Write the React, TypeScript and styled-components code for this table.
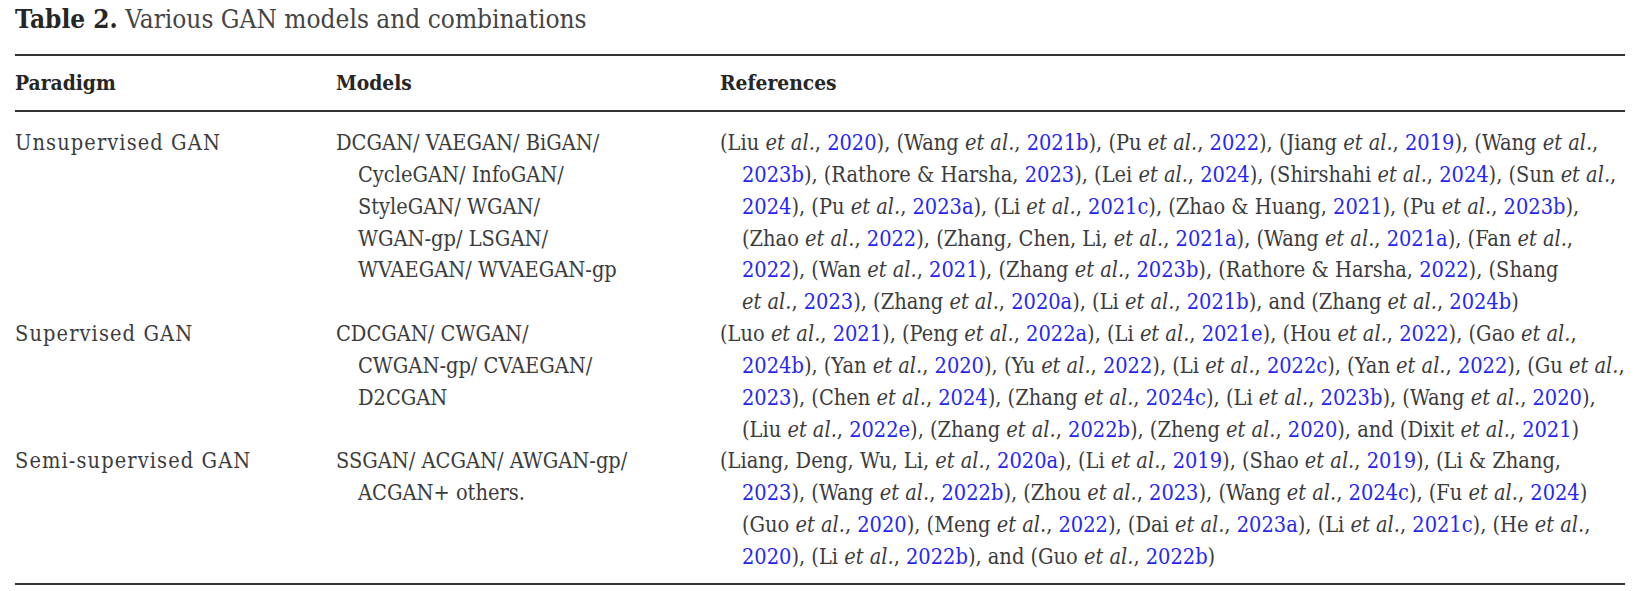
import React from "react";
import styled, { createGlobalStyle } from "styled-components";

const Global = createGlobalStyle`
  html, body { margin: 0; padding: 0; background: #ffffff; }
  body { font-family: "DejaVu Serif", "Liberation Serif", serif; color: #3c3c3c; }
`;

const Page = styled.div`
  width: 1635px;
  height: 591px;
  padding: 0 10px 0 15px;
  box-sizing: border-box;
  font-family: "DejaVu Serif", "Liberation Serif", serif;
  font-stretch: condensed;
`;

const Caption = styled.div`
  height: 54px;
  box-sizing: border-box;
  padding-top: 3px;
  font-size: 26px;
  line-height: 32px;
  color: #444;
  font-weight: 300;
`;

const CaptionLabel = styled.span`
  font-weight: 700;
  color: #262626;
`;

const Table = styled.div`
  display: grid;
  grid-template-columns: 321px 384px 1fr;
  border-top: 2px solid #333;
  border-bottom: 2px solid #333;
`;

const HeadCell = styled.div`
  font-weight: 700;
  color: #262626;
  font-size: 20.8px;
  line-height: 32px;
  padding: 11px 0 11px 0;
  border-bottom: 2px solid #333;
`;

const Cell = styled.div<{ $first?: boolean; $last?: boolean; $spread?: number }>`
  font-size: 21.6px;
  line-height: 31.85px;
  letter-spacing: ${(p) => p.$spread ?? 0}px;
  padding-top: ${(p) => (p.$first ? "15px" : "0")};
  padding-bottom: ${(p) => (p.$last ? "10px" : "0")};
`;

const Line = styled.div<{ $indent?: boolean }>`
  white-space: nowrap;
  padding-left: ${(p) => (p.$indent ? "22px" : "0")};
`;

const Em = styled.i`
  font-style: italic;
`;

const Link = styled.span`
  color: #2626f2;
`;

type Row = { paradigm: string; models: string[]; refs: string[] };

const rows: Row[] = [
  {
    paradigm: "Unsupervised GAN",
    models: [
      "DCGAN/ VAEGAN/ BiGAN/",
      "CycleGAN/ InfoGAN/",
      "StyleGAN/ WGAN/",
      "WGAN-gp/ LSGAN/",
      "WVAEGAN/ WVAEGAN-gp",
    ],
    refs: [
      "(Liu et al., 2020), (Wang et al., 2021b), (Pu et al., 2022), (Jiang et al., 2019), (Wang et al.,",
      "2023b), (Rathore & Harsha, 2023), (Lei et al., 2024), (Shirshahi et al., 2024), (Sun et al.,",
      "2024), (Pu et al., 2023a), (Li et al., 2021c), (Zhao & Huang, 2021), (Pu et al., 2023b),",
      "(Zhao et al., 2022), (Zhang, Chen, Li, et al., 2021a), (Wang et al., 2021a), (Fan et al.,",
      "2022), (Wan et al., 2021), (Zhang et al., 2023b), (Rathore & Harsha, 2022), (Shang",
      "et al., 2023), (Zhang et al., 2020a), (Li et al., 2021b), and (Zhang et al., 2024b)",
    ],
  },
  {
    paradigm: "Supervised GAN",
    models: ["CDCGAN/ CWGAN/", "CWGAN-gp/ CVAEGAN/", "D2CGAN"],
    refs: [
      "(Luo et al., 2021), (Peng et al., 2022a), (Li et al., 2021e), (Hou et al., 2022), (Gao et al.,",
      "2024b), (Yan et al., 2020), (Yu et al., 2022), (Li et al., 2022c), (Yan et al., 2022), (Gu et al.,",
      "2023), (Chen et al., 2024), (Zhang et al., 2024c), (Li et al., 2023b), (Wang et al., 2020),",
      "(Liu et al., 2022e), (Zhang et al., 2022b), (Zheng et al., 2020), and (Dixit et al., 2021)",
    ],
  },
  {
    paradigm: "Semi-supervised GAN",
    models: ["SSGAN/ ACGAN/ AWGAN-gp/", "ACGAN+ others."],
    refs: [
      "(Liang, Deng, Wu, Li, et al., 2020a), (Li et al., 2019), (Shao et al., 2019), (Li & Zhang,",
      "2023), (Wang et al., 2022b), (Zhou et al., 2023), (Wang et al., 2024c), (Fu et al., 2024)",
      "(Guo et al., 2020), (Meng et al., 2022), (Dai et al., 2023a), (Li et al., 2021c), (He et al.,",
      "2020), (Li et al., 2022b), and (Guo et al., 2022b)",
    ],
  },
];

function renderRef(text: string) {
  const parts = text.split(/(et al\.|\b(?:19|20)\d{2}[a-e]?\b)/);
  return parts.map((p, i) => {
    if (p === "et al.") return <Em key={i}>et al.</Em>;
    if (/^(?:19|20)\d{2}[a-e]?$/.test(p)) return <Link key={i}>{p}</Link>;
    return <React.Fragment key={i}>{p}</React.Fragment>;
  });
}

export default function App() {
  return (
    <Page>
      <Global />
      <Caption>
        <CaptionLabel>Table 2.</CaptionLabel> Various GAN models and combinations
      </Caption>
      <Table>
        <HeadCell>Paradigm</HeadCell>
        <HeadCell>Models</HeadCell>
        <HeadCell>References</HeadCell>
        {rows.map((r, ri) => {
          const first = ri === 0;
          const last = ri === rows.length - 1;
          return (
            <React.Fragment key={r.paradigm}>
              <Cell $first={first} $last={last} $spread={1.1}>
                <Line>{r.paradigm}</Line>
              </Cell>
              <Cell $first={first} $last={last}>
                {r.models.map((m, i) => (
                  <Line key={i} $indent={i > 0}>
                    {m}
                  </Line>
                ))}
              </Cell>
              <Cell $first={first} $last={last}>
                {r.refs.map((t, i) => (
                  <Line key={i} $indent={i > 0}>
                    {renderRef(t)}
                  </Line>
                ))}
              </Cell>
            </React.Fragment>
          );
        })}
      </Table>
    </Page>
  );
}
